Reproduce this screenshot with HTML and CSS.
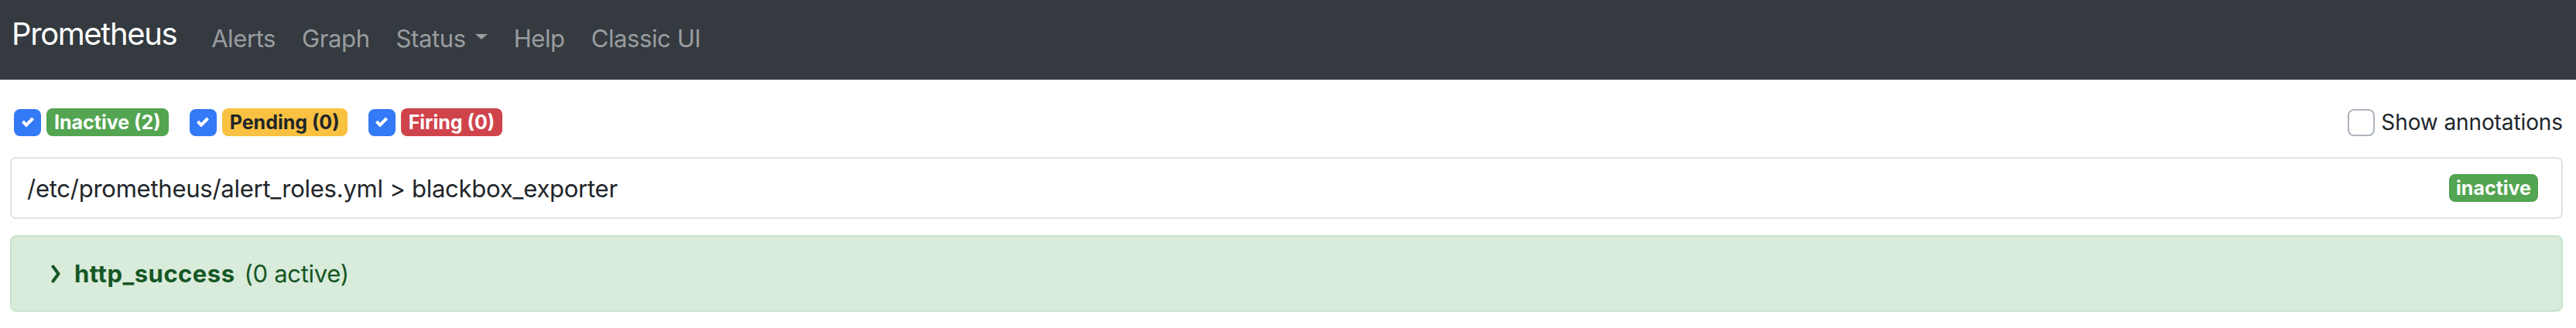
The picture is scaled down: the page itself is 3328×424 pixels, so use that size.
FILE: index.html
```html
<!DOCTYPE html>
<html lang="en">
<head>
<meta charset="utf-8">
<title>Prometheus Time Series Collection and Processing Server</title>
<link rel="stylesheet" href="styles.css">
</head>
<body>
<nav class="navbar">
  <a class="brand" href="#">Prometheus</a>
  <ul class="nav-links">
    <li><a class="nav-link" href="#">Alerts</a></li>
    <li><a class="nav-link" href="#">Graph</a></li>
    <li><a class="nav-link dropdown-toggle" href="#">Status</a></li>
    <li><a class="nav-link" href="#">Help</a></li>
    <li><a class="nav-link" href="#">Classic UI</a></li>
  </ul>
</nav>
<main class="container">
  <div class="filter-row">
    <div class="filters">
      <label class="check-item">
        <span class="check checked"><svg viewBox="0 0 8 8" width="16" height="16"><path fill="#fff" d="M6.564.75l-3.59 3.612-1.538-1.55L0 4.26l2.974 2.99L8 2.193z"/></svg></span>
        <span class="badge badge-success">Inactive (2)</span>
      </label>
      <label class="check-item">
        <span class="check checked"><svg viewBox="0 0 8 8" width="16" height="16"><path fill="#fff" d="M6.564.75l-3.59 3.612-1.538-1.55L0 4.26l2.974 2.99L8 2.193z"/></svg></span>
        <span class="badge badge-warning">Pending (0)</span>
      </label>
      <label class="check-item">
        <span class="check checked"><svg viewBox="0 0 8 8" width="16" height="16"><path fill="#fff" d="M6.564.75l-3.59 3.612-1.538-1.55L0 4.26l2.974 2.99L8 2.193z"/></svg></span>
        <span class="badge badge-danger">Firing (0)</span>
      </label>
    </div>
    <label class="annotations">
      <span class="check"></span>
      <span class="annotations-text">Show annotations</span>
    </label>
  </div>
  <div class="group-card">
    <span class="group-name">/etc/prometheus/alert_roles.yml &gt; blackbox_exporter</span>
    <span class="badge badge-success badge-state">inactive</span>
  </div>
  <div class="rule-alert">
    <svg class="chevron" viewBox="0 0 12 24" width="12" height="24"><polyline points="2.5,2.5 9.5,12 2.5,21.5" fill="none" stroke="#155724" stroke-width="4" stroke-linecap="round" stroke-linejoin="round"/></svg>
    <strong class="rule-name">http_success</strong>
    <span class="rule-count">(0 active)</span>
  </div>
</main>
</body>
</html>
```
FILE: styles.css
```css
html, body {
  margin: 0;
  padding: 0;
  background: #fff;
}
body {
  font-family: Inter, "Noto Sans", "Liberation Sans", sans-serif;
  color: #212529;
  font-size: 32px;
  width: 3328px;
  height: 424px;
  overflow: hidden;
}
a { text-decoration: none; }

.navbar {
  height: 103px;
  background: #343a40;
  display: flex;
  align-items: flex-start;
  padding: 22px 0 0 15px;
  box-sizing: border-box;
}
.brand {
  color: #fff;
  font-size: 40px;
  line-height: 44px;
  margin-right: 28px;
  letter-spacing: -1.4px;
}
.nav-links {
  list-style: none;
  margin: 0;
  padding: 0;
  display: flex;
  align-items: center;
  padding-top: 6px;
}
.nav-link {
  display: flex;
  align-items: center;
  color: rgba(255, 255, 255, 0.5);
  font-size: 31px;
  line-height: 44px;
  padding: 0 17px;
  letter-spacing: -0.4px;
}
.dropdown-toggle::after {
  content: "";
  display: inline-block;
  margin-left: 12px;
  border-top: 7px solid rgba(255, 255, 255, 0.5);
  border-left: 8px solid transparent;
  border-right: 8px solid transparent;
  margin-top: -6px;
}

.container {
  padding: 0 17px 0 13px;
}
.filter-row {
  display: flex;
  justify-content: space-between;
  align-items: center;
  padding: 37px 0 0 5px;
  height: 36px;
  margin-bottom: 27px;
}
.filters {
  display: flex;
  align-items: center;
  gap: 27px;
}
.check-item, .annotations {
  display: flex;
  align-items: center;
  gap: 7px;
}
.check {
  width: 31px;
  height: 31px;
  border: 2px solid #adb5bd;
  border-radius: 8px;
  background: #fff;
  display: flex;
  align-items: center;
  justify-content: center;
}
.check.checked {
  background: #3479f6;
  border-color: #3479f6;
}
.badge {
  display: inline-flex;
  align-items: center;
  height: 36px;
  padding: 0 10px;
  border-radius: 8px;
  font-size: 25px;
  font-weight: 700;
  line-height: 1;
  box-sizing: border-box;
}
.badge-success { background: #53a551; color: #fff; }
.badge-warning { background: #f8c141; color: #212529; }
.badge-danger { background: #cf444b; color: #fff; }

.annotations { gap: 8px; }
.annotations-text {
  font-size: 28px;
  letter-spacing: -0.1px;
}

.group-card {
  height: 80px;
  border: 2px solid #dfe2e6;
  border-radius: 8px;
  box-sizing: border-box;
  display: flex;
  align-items: center;
  justify-content: space-between;
  padding: 0 30px 0 20px;
  margin-bottom: 21px;
}
.group-name {
  font-size: 31px;
  letter-spacing: -0.25px;
}
.badge-state {
  padding: 0 9px;
}

.rule-alert {
  height: 99px;
  background: #d9ebdb;
  border: 2px solid #c8e4cc;
  border-radius: 8px;
  box-sizing: border-box;
  display: flex;
  align-items: center;
  padding-left: 51px;
  color: #155724;
  font-size: 31px;
}
.chevron {
  margin-right: 18px;
}
.rule-name {
  font-weight: 700;
  margin-right: 12px;
  letter-spacing: 0.5px;
}
.rule-count {
  letter-spacing: -0.3px;
}
```
